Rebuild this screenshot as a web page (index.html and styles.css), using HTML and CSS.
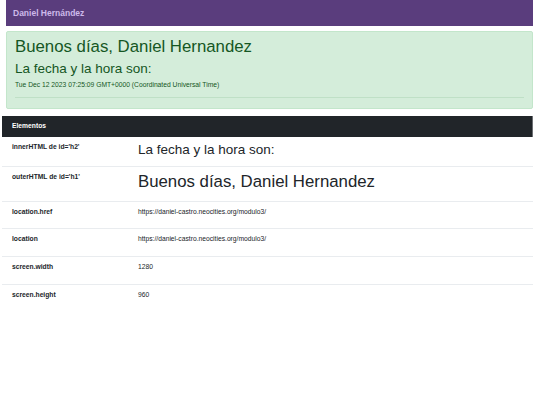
FILE: index.html
```html
<!DOCTYPE html>
<html lang="es">
<head>
<meta charset="utf-8">
<title>Modulo 3</title>
<link rel="stylesheet" href="styles.css">
</head>
<body>
<div class="page">
  <nav class="navbar"><span class="brand">Daniel Hernández</span></nav>
  <div class="alert">
    <h1 class="title">Buenos días, Daniel Hernandez</h1>
    <h2 class="subtitle">La fecha y la hora son:</h2>
    <p class="date">Tue Dec 12 2023 07:25:09 GMT+0000 (Coordinated Universal Time)</p>
    <hr class="rule">
  </div>
  <table class="data">
    <thead>
      <tr><th class="head" colspan="2">Elementos</th></tr>
    </thead>
    <tbody>
      <tr><th class="label">innerHTML de id='h2'</th><td class="value"><h2 class="subtitle cell-h">La fecha y la hora son:</h2></td></tr>
      <tr><th class="label">outerHTML de id='h1'</th><td class="value"><h1 class="title cell-h">Buenos días, Daniel Hernandez</h1></td></tr>
      <tr><th class="label">location.href</th><td class="value"><p class="val">https://daniel-castro.neocities.org/modulo3/</p></td></tr>
      <tr><th class="label">location</th><td class="value"><p class="val">https://daniel-castro.neocities.org/modulo3/</p></td></tr>
      <tr><th class="label">screen.width</th><td class="value"><p class="val">1280</p></td></tr>
      <tr class="last"><th class="label">screen.height</th><td class="value"><p class="val">960</p></td></tr>
    </tbody>
  </table>
</div>
</body>
</html>
```

FILE: styles.css
```css
html, body {
  margin: 0;
  padding: 0;
  background: #ffffff;
}
body {
  font-family: "Liberation Sans", Arial, sans-serif;
  font-size: 6.72px;
  line-height: 1.5;
  color: #212529;
}
.page {
  display: flex;
  flex-direction: column;
  padding: 0 7px 0 6px;
}
.navbar {
  height: 26px;
  background: #5a3d7d;
  display: flex;
  align-items: center;
  padding: 0 7px;
}
.brand {
  font-size: 8.5px;
  font-weight: bold;
  color: #cdb9ea;
  line-height: 1.5;
}
.alert {
  margin-top: 5px;
  margin-bottom: 7px;
  background: #d4edda;
  border: 1px solid #c3e6cb;
  border-radius: 2px;
  color: #155724;
  padding: 5px 8px 3px 8px;
}
.title {
  font-size: 16.8px;
  font-weight: 500;
  line-height: 1.2;
  margin: 0 0 3.4px 0;
}
.subtitle {
  font-size: 13.5px;
  font-weight: 500;
  line-height: 1.2;
  margin: 0 0 3.4px 0;
}
.date {
  margin: 0 0 6.7px 0;
}
.rule {
  margin: 6.7px 0 6.7px 0;
  border: 0;
  border-top: 1px solid #bfe0c6;
  height: 0;
}
.data {
  border-collapse: collapse;
  margin-left: -4px;
  width: 531px;
}
.head {
  background: #212529;
  color: #ffffff;
  text-align: left;
  font-weight: bold;
  padding: 5px 10px;
  height: 11px;
  border-right: 1px solid #6c6f73;
}
.label {
  text-align: left;
  vertical-align: top;
  font-weight: bold;
  width: 116px;
  padding: 5px 5px 5px 10px;
  border-top: 1px solid #e9ecef;
}
.value {
  vertical-align: top;
  padding: 5px 5px;
  border-top: 1px solid #e9ecef;
}
tbody tr:first-child .label,
tbody tr:first-child .value {
  border-top: 0;
}
.cell-h {
  color: #212529;
}
.val {
  margin: 0 0 6.7px 0;
}
```
